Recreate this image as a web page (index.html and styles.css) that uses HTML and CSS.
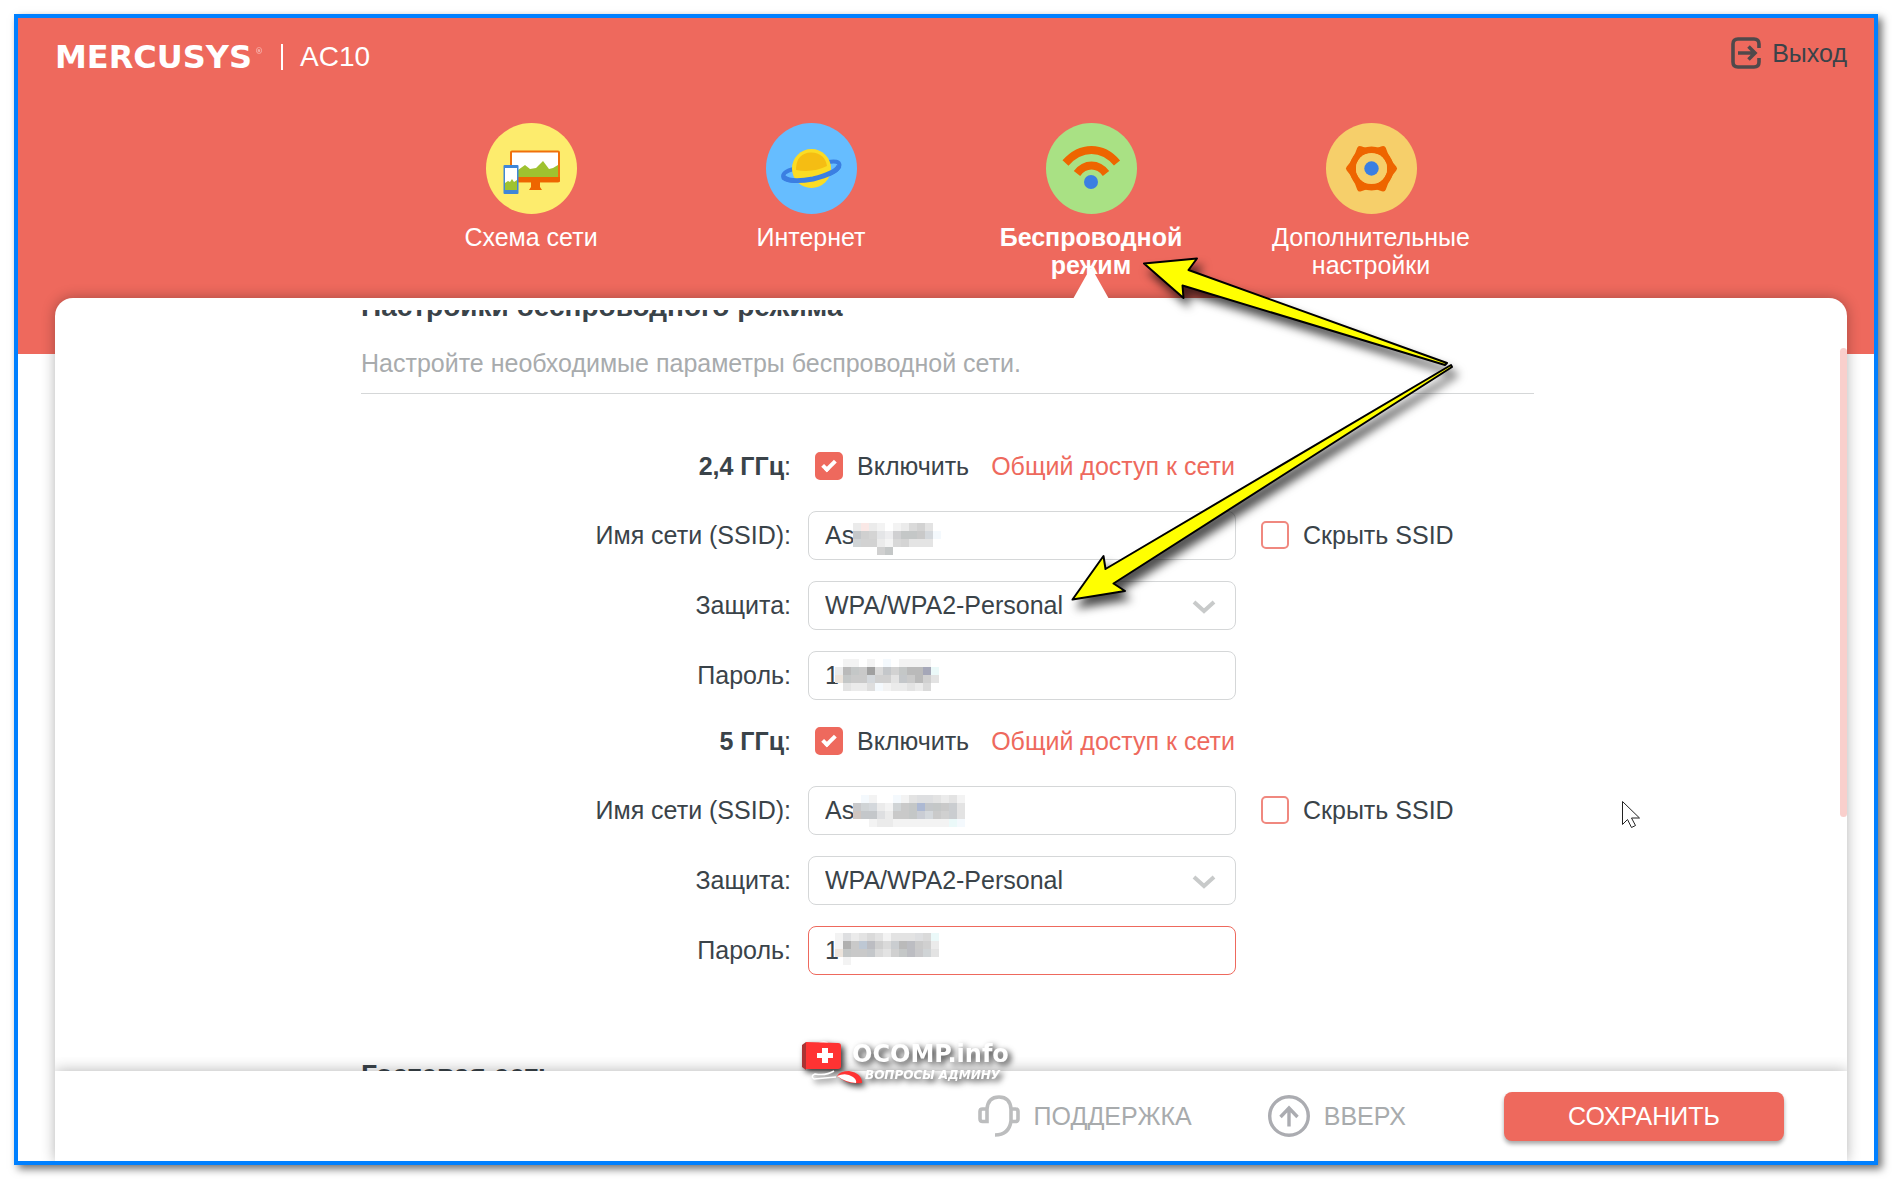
FILE: index.html
```
<!DOCTYPE html>
<html lang="ru">
<head>
    <meta charset="UTF-8">
    <meta name="viewport" content="width=device-width, initial-scale=1.0">
    <title>MERCUSYS AC10</title>
    <link rel="stylesheet" href="styles.css">
</head>
<body>
    <div class="frame">
        <header class="topbar">
            <div class="brand">
                <span class="logo">MERCUSYS<sup>®</sup></span>
                <span class="divider"></span>
                <span class="model">AC10</span>
            </div>
            <a class="logout" href="#">
                <svg width="30" height="32" viewBox="0 0 30 32" fill="none" stroke="#50494b" stroke-width="3.6">
                    <path d="M28 11V7q0-5-5-5H7Q2 2 2 7v18q0 5 5 5h16q5 0 5-5v-4"/>
                    <path d="M7 16h16M17.500 9.500L24 16l-6.500 6.500"/>
                </svg>
                Выход
            </a>
        </header>

        <nav class="menu">
            <a class="menu-item" href="#">
                <svg class="menu-icon" viewBox="0 0 91 91">
                    <circle cx="45.500" cy="45.500" r="45.500" fill="#fdec6d"/>
                    <rect x="25" y="28.500" width="48" height="30" rx="1" fill="#fff" stroke="#f0700c" stroke-width="2"/>
                    <path d="M26 54v-4l6-3 7-5 5 4 6-1 7-7 6 8 4-1 5-3v12z" fill="#9fc22f"/>
                    <path d="M24 54h50v4q0 1-2 1H54v5l2 3H43l2-3v-5H24z" fill="#ee6500"/>
                    <rect x="17.500" y="42" width="15" height="29" rx="1" fill="#3f86d8"/>
                    <rect x="19" y="45" width="12" height="22" fill="#fff"/>
                    <path d="M19 67v-7l3-2 2 1 2-3 2 3 3-2v10z" fill="#9fc22f"/>
                </svg>
                <span>Схема сети</span>
            </a>
            <a class="menu-item" href="#">
                <svg class="menu-icon" viewBox="0 0 91 91">
                    <circle cx="45.500" cy="45.500" r="45.500" fill="#66bdff"/>
                    <path d="M62 39Q73 37 73.500 42 73 50 50 55 24 61 17.500 55 15 49 28 46" fill="none" stroke="#3b7fe2" stroke-width="4"/>
                    <circle cx="45.500" cy="45.500" r="19.500" fill="#fbdc24"/>
                    <path d="M30 45Q31 30 45 29.500 59 30 61 43 47 50 30 47z" fill="#f5bd13"/>
                    <path d="M17.500 54Q24 60 47 56 70 50 73 43" fill="none" stroke="#3b7fe2" stroke-width="5"/>
                </svg>
                <span>Интернет</span>
            </a>
            <a class="menu-item active" href="#">
                <svg class="menu-icon" viewBox="0 0 91 91">
                    <circle cx="45.500" cy="45.500" r="45.500" fill="#a9e184"/>
                    <path d="M19.500 40Q31 27 45.500 27 60 27 71 40" fill="none" stroke="#ee6500" stroke-width="8"/>
                    <path d="M31 50.500Q37 42.500 45.500 42.500 54 42.500 60 50.500" fill="none" stroke="#ee6500" stroke-width="8"/>
                    <circle cx="45" cy="59" r="7" fill="#3b7fe2"/>
                </svg>
                <span>Беспроводной режим</span>
            </a>
            <a class="menu-item" href="#">
                <svg class="menu-icon" viewBox="0 0 91 91">
                    <circle cx="45.500" cy="45.500" r="45.500" fill="#f6cf6a"/>
                    <g fill="none" stroke="#ee6500">
                        <circle cx="45.500" cy="45.500" r="18.800" stroke-width="6.500"/>
                        <path d="M23 45.500Q30 38 34 26q11.500 5 23 0 4 12 11 19.500-7 8-11 20-11.500-5-23 0-4-12-11-20z" stroke-width="6" stroke-linejoin="round"/>
                    </g>
                    <circle cx="45.500" cy="45.500" r="15.500" fill="#f6cf6a"/>
                    <circle cx="45.500" cy="45.500" r="7.200" fill="#3b7fe2"/>
                </svg>
                <span>Дополнительные настройки</span>
            </a>
        </nav>

        <main class="panel">
            <div class="viewport">
                <form class="settings" id="wifi">
                    <h2>Настройки беспроводного режима</h2>
                    <p class="hint">Настройте необходимые параметры беспроводной сети.</p>

                    <div class="band">
                        <div class="row">
                            <span class="name"><b>2,4 ГГц</b>:</span>
                            <div class="enable">
                                <label class="check"><input type="checkbox" checked>Включить</label>
                                <a class="share" href="#">Общий доступ к сети</a>
                            </div>
                        </div>
                        <div class="row">
                            <label class="name" for="ssid24">Имя сети (SSID):</label>
                            <div class="field"><input class="box" id="ssid24" type="text" value="As"><svg class="mosaic" data-mosaic="ssid24"></svg></div>
                            <label class="check"><input type="checkbox">Скрыть SSID</label>
                        </div>
                        <div class="row">
                            <label class="name" for="sec24">Защита:</label>
                            <div class="field">
                                <select class="box" id="sec24"><option>WPA/WPA2-Personal</option></select>
                                <svg class="chevron" viewBox="0 0 24 14"><path d="M2 2l10 9L22 2"/></svg>
                            </div>
                        </div>
                        <div class="row">
                            <label class="name" for="pass24">Пароль:</label>
                            <div class="field"><input class="box" id="pass24" type="text" value="1"><svg class="mosaic" data-mosaic="pass24"></svg></div>
                        </div>
                    </div>

                    <div class="band">
                        <div class="row">
                            <span class="name"><b>5 ГГц</b>:</span>
                            <div class="enable">
                                <label class="check"><input type="checkbox" checked>Включить</label>
                                <a class="share" href="#">Общий доступ к сети</a>
                            </div>
                        </div>
                        <div class="row">
                            <label class="name" for="ssid5">Имя сети (SSID):</label>
                            <div class="field"><input class="box" id="ssid5" type="text" value="As"><svg class="mosaic" data-mosaic="ssid5"></svg></div>
                            <label class="check"><input type="checkbox">Скрыть SSID</label>
                        </div>
                        <div class="row">
                            <label class="name" for="sec5">Защита:</label>
                            <div class="field">
                                <select class="box" id="sec5"><option>WPA/WPA2-Personal</option></select>
                                <svg class="chevron" viewBox="0 0 24 14"><path d="M2 2l10 9L22 2"/></svg>
                            </div>
                        </div>
                        <div class="row">
                            <label class="name" for="pass5">Пароль:</label>
                            <div class="field"><input class="box current" id="pass5" type="text" value="1"><svg class="mosaic" data-mosaic="pass5"></svg></div>
                        </div>
                    </div>

                    <h2 class="next">Гостевая сеть</h2>
                </form>
            </div>

            <footer class="actions">
                <a class="action" href="#">
                    <svg width="42" height="42" viewBox="0 0 42 42" fill="none" stroke="#bcbdbe" stroke-width="3.600">
                        <path d="M9 14v12.500H4.500Q2 26.500 2 24v-7.500Q2 14 4.500 14H9Q10 2 21 2t12 12h4.500Q40 14 40 16.500V24q0 2.500-2.500 2.500H33V14M33 26q-2 14-16 14"/>
                    </svg>
                    ПОДДЕРЖКА
                </a>
                <a class="action" href="#">
                    <svg width="42" height="42" viewBox="0 0 42 42" fill="none" stroke="#abacb1" stroke-width="3.400">
                        <circle cx="21" cy="21" r="19.300"/>
                        <path d="M21 31.500V13M12.500 22L21 13l8.500 9"/>
                    </svg>
                    ВВЕРХ
                </a>
                <button class="save" type="submit" form="wifi">СОХРАНИТЬ</button>
            </footer>

            <span class="pointer"></span>
            <span class="thumb"></span>

            <svg class="arrows" width="420" height="380" viewBox="1063 250 420 380">
                <g fill="#ff0" stroke="#000" stroke-width="2" stroke-linejoin="round">
                    <path d="M1144 263.500L1197 258.500 1188.500 270 1447 363 1445 365 1182.500 285.500 1183.500 298z"/>
                    <path d="M1072.500 599.500L1103.500 556 1105.500 569 1451 365 1452 367 1113.500 583.500 1125 591z"/>
                </g>
            </svg>

            <div class="watermark">
                <svg width="62" height="44" viewBox="0 0 62 44">
                    <path d="M16 3Q22-1 27 3" fill="none" stroke="#fff" stroke-width="1.500"/>
                    <path d="M0 4l4-3v28l-4-3z" fill="#a33"/>
                    <path d="M4 1l32 1q3 0 3 3v20q0 3-3 3H4z" fill="#f33"/>
                    <path d="M20 7h6v5h5v5h-5v5h-6v-5h-5v-5h5z" fill="#fff"/>
                    <path d="M32 30Q24 35 13 33 8 35 12 38l22-2" fill="none" stroke="#fff" stroke-width="1.500"/>
                    <path d="M35 35Q38 30 47 30 60 32 60 42 45 44 35 35z" fill="#f33"/>
                    <path d="M35 35q9-4 16 1 4 3 3 6-11-1-19-7z" fill="#fff"/>
                </svg>
                <div class="wm-text">
                    <strong>OCOMP.info</strong>
                    <em>ВОПРОСЫ АДМИНУ</em>
                </div>
            </div>

            <svg class="cursor" width="18" height="28" viewBox="0 0 18 28">
                <path d="M.5 .5v23l5-5 4 8 4-2-4-7.500h8z" fill="#fff" stroke="#222"/>
            </svg>
        </main>
    </div>

    <script src="script.js"></script>
</body>
</html>
```
FILE: styles.css
```
* {
    box-sizing: border-box;
}

body {
    margin: 0;
    padding: 14px;
    height: 100vh;
    min-height: 700px;
    display: flex;
    background: #fff;
    color: #3a4349;
    font-family: "Liberation Sans", Arial, sans-serif;
    font-size: 25px;
    line-height: 28px;
}

a {
    color: inherit;
    text-decoration: none;
}

.frame {
    flex: 1;
    display: flex;
    flex-direction: column;
    min-width: 0;
    padding: 0 27px 0 37px;
    border: 4px solid #0080ff;
    background: linear-gradient(#ee695d 336px, #fff 336px);
    box-shadow: 4px 4px 8px rgba(0, 0, 0, 0.55);
    overflow: hidden;
}

/* header */
.topbar {
    display: flex;
    justify-content: space-between;
    height: 105px;
    padding-top: 18px;
}

.brand,
.logout {
    display: flex;
    align-items: center;
    height: 42px;
}

.brand {
    color: #fff;
    font-size: 28px;
}

.logo {
    width: 226px;
    font-family: "DejaVu Sans", sans-serif;
    font-weight: bold;
    font-size: 32px;
}

.logo sup {
    margin-left: 3px;
    font-size: 8px;
    line-height: 8px;
    vertical-align: 14px;
    opacity: 0.5;
}

.divider {
    width: 2px;
    height: 26px;
    margin-right: 17px;
    background: #fff;
}

.logout {
    gap: 11px;
    height: 34px;
}

/* main menu */
.menu {
    display: flex;
    justify-content: center;
    height: 175px;
    flex-shrink: 0;
}

.menu-item {
    width: 280px;
    padding: 0 30px;
    display: flex;
    flex-direction: column;
    align-items: center;
    gap: 9px;
    color: #fff;
    text-align: center;
}

.menu-icon {
    width: 91px;
    height: 91px;
}

.menu-item.active {
    font-weight: bold;
}

/* white sheet */
.panel {
    position: relative;
    flex: 1;
    min-height: 0;
    display: flex;
    flex-direction: column;
    padding-top: 12px;
    background: #fff;
    border-radius: 18px 18px 0 0;
    box-shadow: 0 0 14px rgba(0, 0, 0, 0.3);
}

.pointer {
    position: absolute;
    left: calc(50% + 122px);
    top: -31px;
    border: 18px solid transparent;
    border-top: 0;
    border-bottom: 32px solid #fff;
}

.thumb {
    position: absolute;
    right: 0;
    top: 50px;
    width: 7px;
    height: 469px;
    border-radius: 4px;
    background: #f9cfcc;
}

.viewport {
    flex: 1;
    min-height: 0;
    padding-right: 7px;
    overflow: hidden;
}

.settings {
    width: 1173px;
    max-width: 100%;
    margin: -19px auto 0;
}

h2 {
    margin: 0;
    font-size: 28px;
    line-height: 32px;
}

.hint {
    margin: 0 0 48px;
    padding: 26px 0 16px;
    border-bottom: 1px solid #d5d7d8;
    color: #a8abad;
}

.band {
    display: flex;
    flex-direction: column;
    gap: 21px;
    margin-bottom: 17px;
}

.band .row + .row {
    margin-top: -1px;
}

.row {
    display: flex;
    align-items: center;
    height: 50px;
}

.band .row:first-child {
    height: 48px;
}

.name {
    width: 430px;
    margin-right: 17px;
    text-align: right;
}

.field {
    position: relative;
    width: 428px;
    margin-right: 25px;
}

.box {
    display: block;
    width: 100%;
    height: 49px;
    padding: 0 16px;
    border: 1px solid #d5d7d8;
    border-radius: 8px;
    background: #fff;
    color: inherit;
    font: inherit;
    appearance: none;
    outline: none;
}

.box.current {
    border-color: #ee695d;
}

.chevron {
    position: absolute;
    right: 20px;
    top: 19px;
    width: 24px;
    height: 14px;
    fill: none;
    stroke: #c8caca;
    stroke-width: 4;
}

.mosaic {
    position: absolute;
    left: 27px;
    top: 4px;
    width: 140px;
    height: 40px;
}

.enable {
    display: flex;
    gap: 22px;
    padding-left: 7px;
}

.check {
    display: flex;
    align-items: center;
    gap: 14px;
}

.check input {
    width: 28px;
    height: 28px;
    margin: 0;
    appearance: none;
    border: 2px solid #f0887f;
    border-radius: 5px;
    display: grid;
    place-items: center;
}

.check input:checked {
    border-color: #ee695d;
    background: #ee695d;
}

.check input:checked::after {
    content: "";
    width: 10px;
    height: 4px;
    border-left: 4px solid #fff;
    border-bottom: 4px solid #fff;
    transform: rotate(-45deg) translate(1px, -1px);
}

.share {
    color: #ee695d;
}

.next {
    margin-top: 84px;
}

/* bottom bar */
.actions {
    display: flex;
    align-items: center;
    justify-content: flex-end;
    height: 90px;
    padding-right: 63px;
    background: #fff;
    box-shadow: 0 0 14px rgba(0, 0, 0, 0.3);
    clip-path: inset(-14px 0 0 0);
    z-index: 1;
}

.action {
    display: flex;
    align-items: center;
    gap: 14px;
    margin-right: 76px;
    color: #a8abad;
}

.action + .action {
    margin-right: 98px;
}

.save {
    width: 280px;
    height: 49px;
    border: 0;
    border-radius: 8px;
    background: #ee695d;
    box-shadow: 0 3px 4px rgba(0, 0, 0, 0.35);
    color: #fff;
    font: inherit;
}

/* marks lying over the page */
.arrows {
    position: absolute;
    left: calc(50% + 112px);
    top: -48px;
    z-index: 2;
    filter: drop-shadow(5px 8px 5px rgba(0, 0, 0, 0.7));
    pointer-events: none;
}

.watermark {
    position: absolute;
    left: calc(50% - 149px);
    bottom: 76px;
    z-index: 2;
    display: flex;
    filter: drop-shadow(3px 3px 3px rgba(0, 0, 0, 0.8));
    color: #fff;
    font-family: "DejaVu Sans", sans-serif;
}

.wm-text {
    display: flex;
    flex-direction: column;
    margin-left: -12px;
}

.wm-text strong {
    font-size: 24px;
    line-height: 26px;
}

.wm-text em {
    padding-left: 13px;
    font-size: 12px;
    line-height: 16px;
    font-weight: bold;
}

.cursor {
    position: absolute;
    right: 207px;
    top: 503px;
}
```
FILE: script.js
```
// colours of the blocks that cover the network names and passwords, 8px each
const mosaics = {
    ssid24: { x: 18, y: 8, rows: [
        "ebebeb fae8e6 ebebeb f3f3f3 - f3f3f3 ebebeb dadada d2d2d2 e3e3e3",
        "c4c7ca d0d0d0 d4d4d4 e4e5e7 ededef d0d0d2 c4c7c7 c4c7c7 c9c9c9 d4d8dc f4f9fd",
        "d0d4d6 d2d2d2 d2d2d2 ebebeb f4f4f4 d8d8d8 d4d4d4 e4e4e4 e4e4e4 e4e4e4",
        "- - - d0d0d0 c4c7c7"
    ] },
    pass24: { x: 0, y: 4, rows: [
        "- f3f3f3 f3f3f3 - f3f3f3 - f4f9fd - f3f3f3 f3f3f3 f3f3f3 f3f3f3",
        "ebebeb bababa c4c7c7 c9c9c9 a0a0a0 dadada c4c7ca d2d2d2 c4c7c7 bababa bababa a5a7b8 ebf9f9",
        "ece4dc c4c7c7 cacaca cacaca d4d8dc d0d0d0 d0d0d0 e3e3e3 c4c7ca cacaca bababa d0d0d0 e3e3e3",
        "- e3e3e3 ebebeb ebebeb dedede f4f9fd f3f3f3 ebebeb ebebeb e3e3e3 ebebeb dadada"
    ] },
    ssid5: { x: 18, y: 5, rows: [
        "- f4f9fd f3f3f3 - - f4f9fd f3f3f3 e3e3e3 dedfe1 dedfe1 e3e3e3 ebebeb e3e3e3 f3f3f3",
        "c9c9cb d0d4d6 d4d8dc ebebeb f3f3f3 d0d4d6 c9c9c9 c4c7c7 adb9d3 c4c7ca c4c7c7 c9c9c9 cacdd0 e3e3e3",
        "d0c6c1 c4c7ca c4c7ca dedfe1 ebebeb c9c9c9 c9c9c9 c4c7c7 cacdd4 d4d8dc cacaca d0d0d0 cacdd0 e3e3e3",
        "- - f3f3f3 ebebeb ebebeb f3f3f3 f3f3f3 f3f3f3 f3f3f3 f3f3f3 f3f3f3 f3f3f3 ebf9f9 f4f9fd"
    ] },
    pass5: { x: 0, y: 3, rows: [
        "f3f3f3 dedfe1 ebebeb e3e3e3 dadada e3e3e3 f3f3f3 e3e3e3 e3e3e3 e3e3e3 dedfe1 dadada ebf9f9",
        "f3f3f3 b0b0b0 c9c9c9 bec8d4 bcbdc2 cfcfcf dadada cacdd0 bababa bcbdc2 cacaca d0d0d0 ebebeb",
        "ece4dc c4c7c7 c9c9c9 c9c9c9 c4c7ca dadada e3e3e3 d0d0d0 c4c7c7 bcbdc2 c9c9cb d0d4d6 e3e3e3",
        "- f3f3f3"
    ] }
};

document.querySelectorAll("[data-mosaic]").forEach(svg => {
    const { x, y, rows } = mosaics[svg.dataset.mosaic];
    rows.forEach((row, r) => {
        row.split(" ").forEach((color, c) => {
            if (color === "-") return;
            const rect = document.createElementNS("http://www.w3.org/2000/svg", "rect");
            rect.setAttribute("x", x + c * 8);
            rect.setAttribute("y", y + r * 8);
            rect.setAttribute("width", 8);
            rect.setAttribute("height", 8);
            rect.setAttribute("fill", "#" + color);
            svg.appendChild(rect);
        });
    });
});
```
